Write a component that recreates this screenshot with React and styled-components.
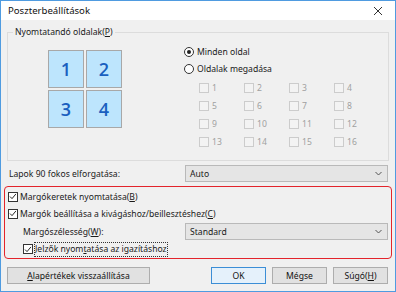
import styled, { createGlobalStyle } from "styled-components";

const GlobalStyle = createGlobalStyle`
    html, body {
        margin: 0;
        padding: 0;
        background: #ffffff;
    }
    body {
        font-family: "Noto Sans", "Open Sans", "Liberation Sans", sans-serif;
        font-size: 8.6px;
        color: #1a1a1a;
    }
`;

const Chevron = () => (
    <svg width="7" height="5" viewBox="0 0 7 5">
        <path d="M0.5 1 L3.5 4 L6.5 1" fill="none" stroke="#555" strokeWidth="1" />
    </svg>
);

const Check = () => (
    <svg width="9" height="9" viewBox="0 0 9 9">
        <path d="M1.2 4.6 L3.4 6.9 L7.8 1.6" fill="none" stroke="#222" strokeWidth="1.1" />
    </svg>
);

const App = () => {
    const pages = Array.from({ length: 16 }, (_, i) => i + 1);

    return (
        <>
            <GlobalStyle />
            <Window>
                <TitleBar>
                    <span>Poszterbeállítások</span>
                    <CloseBtn>
                        <svg width="10" height="10" viewBox="0 0 10 10">
                            <path d="M1 1 L9 9 M9 1 L1 9" stroke="#333" strokeWidth="1" />
                        </svg>
                    </CloseBtn>
                </TitleBar>

                <Body>
                    <GroupBox>
                        <Legend>
                            Nyomtatandó oldalak(<u>P</u>)
                        </Legend>
                        <GroupInner>
                            <Tiles>
                                {[1, 2, 3, 4].map((n) => (
                                    <Tile key={n}>{n}</Tile>
                                ))}
                            </Tiles>
                            <Options>
                                <RadioRow>
                                    <Radio checked />
                                    Minden oldal
                                </RadioRow>
                                <RadioRow>
                                    <Radio />
                                    Oldalak megadása
                                </RadioRow>
                                <PageGrid>
                                    {pages.map((p) => (
                                        <PageItem key={p}>
                                            <Box disabled />
                                            {p}
                                        </PageItem>
                                    ))}
                                </PageGrid>
                            </Options>
                        </GroupInner>
                    </GroupBox>

                    <FieldRow>
                        <span>Lapok 90 fokos elforgatása:</span>
                        <Select>
                            Auto
                            <Chevron />
                        </Select>
                    </FieldRow>

                    <Highlight>
                        <CheckRow>
                            <Box>
                                <Check />
                            </Box>
                            <span>
                                Margókeretek nyomtatása(<u>B</u>)
                            </span>
                        </CheckRow>
                        <CheckRow>
                            <Box>
                                <Check />
                            </Box>
                            <span>
                                Margók beállítása a kivágáshoz/beillesztéshez(<u>C</u>)
                            </span>
                        </CheckRow>
                        <SubField>
                            <span>
                                Margószélesség(<u>W</u>):
                            </span>
                            <Select>
                                Standard
                                <Chevron />
                            </Select>
                        </SubField>
                        <CheckRow indent>
                            <Box>
                                <Check />
                            </Box>
                            <Focus>
                                Jelzők nyom<u>t</u>atása az igazításhoz
                            </Focus>
                        </CheckRow>
                    </Highlight>

                    <ButtonBar>
                        <Button wide>
                            <span>
                                <u>A</u>lapértékek visszaállítása
                            </span>
                        </Button>
                        <Spacer />
                        <Button primary>OK</Button>
                        <Button>Mégse</Button>
                        <Button>
                            <span>
                                Súgó(<u>H</u>)
                            </span>
                        </Button>
                    </ButtonBar>
                </Body>
            </Window>
        </>
    );
};

const Window = styled.div`
    width: 396px;
    height: 292px;
    box-sizing: border-box;
    border: 1px solid #4f9be0;
    display: flex;
    flex-direction: column;
    overflow: hidden;
`;

const TitleBar = styled.div`
    height: 19px;
    flex: none;
    background: #ffffff;
    display: flex;
    align-items: center;
    justify-content: space-between;
    padding: 0 7px 0 7px;
    font-size: 9.6px;
    color: #111;
`;

const CloseBtn = styled.div`
    width: 20px;
    display: flex;
    justify-content: center;
    align-items: center;
`;

const Body = styled.div`
    flex: 1;
    background: #f0f0f0;
    padding: 7px 6px 0 6px;
    display: flex;
    flex-direction: column;
`;

const GroupBox = styled.fieldset`
    margin: 0;
    padding: 0;
    height: 134px;
    box-sizing: border-box;
    border: 1px solid #dcdcdc;
    border-radius: 0;
    min-width: 0;
`;

const Legend = styled.legend`
    margin-left: 5px;
    padding: 0 2px;
    line-height: 11px;
`;

const GroupInner = styled.div`
    display: flex;
    padding: 5px 0 0 40px;
`;

const Tiles = styled.div`
    display: grid;
    grid-template-columns: 36px 36px;
    grid-template-rows: 38px 38px;
    gap: 2px;
    margin-top: 7px;
`;

const Tile = styled.div`
    background: #bde5fd;
    border: 1px solid #a8a8a8;
    box-sizing: border-box;
    display: flex;
    align-items: center;
    justify-content: center;
    color: #1a5fbf;
    font-family: "Open Sans", "Noto Sans", sans-serif;
    font-weight: 600;
    font-size: 18px;
`;

const Options = styled.div`
    margin-left: 62px;
    display: flex;
    flex-direction: column;
`;

const RadioRow = styled.div`
    height: 17px;
    display: flex;
    align-items: center;
    gap: 3px;
`;

const Radio = styled.span`
    width: 10px;
    height: 10px;
    box-sizing: border-box;
    border-radius: 50%;
    border: 1px solid #333;
    background: #fff;
    position: relative;
    flex: none;
    &::after {
        content: "";
        display: ${(p) => (p.checked ? "block" : "none")};
        position: absolute;
        left: 2px;
        top: 2px;
        width: 4px;
        height: 4px;
        border-radius: 50%;
        background: #222;
    }
`;

const PageGrid = styled.div`
    display: grid;
    grid-template-columns: repeat(4, 45px);
    grid-auto-rows: 18px;
    margin: 2px 0 0 15px;
`;

const PageItem = styled.div`
    display: flex;
    align-items: center;
    gap: 3px;
    color: #a0a0a0;
`;

const Box = styled.span`
    width: 10px;
    height: 10px;
    box-sizing: border-box;
    flex: none;
    border: 1px solid ${(p) => (p.disabled ? "#cccccc" : "#333333")};
    background: ${(p) => (p.disabled ? "#f3f3f3" : "#ffffff")};
    display: flex;
    align-items: center;
    justify-content: center;
`;

const FieldRow = styled.div`
    height: 25px;
    display: flex;
    align-items: center;
    justify-content: space-between;
    padding: 0 0 0 2px;
    margin-right: 1px;
`;

const Select = styled.div`
    width: 203px;
    height: 17px;
    box-sizing: border-box;
    background: #e5e5e5;
    border: 1px solid #b9b9b9;
    display: flex;
    align-items: center;
    justify-content: space-between;
    padding: 0 5px 0 4px;
`;

const Highlight = styled.div`
    margin: 0 -3px;
    height: 73px;
    box-sizing: border-box;
    border: 1.5px solid #e3242b;
    border-radius: 4px;
    padding: 1px 2px 0 3px;
    display: flex;
    flex-direction: column;
`;

const CheckRow = styled.div`
    height: 18px;
    display: flex;
    align-items: center;
    gap: 2px;
    padding-left: ${(p) => (p.indent ? "15px" : "0")};
`;

const Focus = styled.span`
    outline: 1px dotted #333;
    outline-offset: 0;
    padding: 1px 0;
    line-height: 11px;
`;

const SubField = styled.div`
    height: 19px;
    display: flex;
    align-items: center;
    justify-content: space-between;
    padding-left: 15px;
    margin-right: 1px;
`;

const ButtonBar = styled.div`
    display: flex;
    align-items: center;
    gap: 6px;
    margin-top: 8px;
    padding-right: 1px;
`;

const Spacer = styled.div`
    flex: 1;
`;

const Button = styled.div`
    width: ${(p) => (p.wide ? "143px" : "55px")};
    height: 17px;
    box-sizing: border-box;
    background: ${(p) => (p.primary ? "#e5f1fb" : "#e1e1e1")};
    border: 1px solid ${(p) => (p.primary ? "#3c8ed6" : "#adadad")};
    display: flex;
    align-items: center;
    justify-content: center;
    color: #111;
`;

export default App;
